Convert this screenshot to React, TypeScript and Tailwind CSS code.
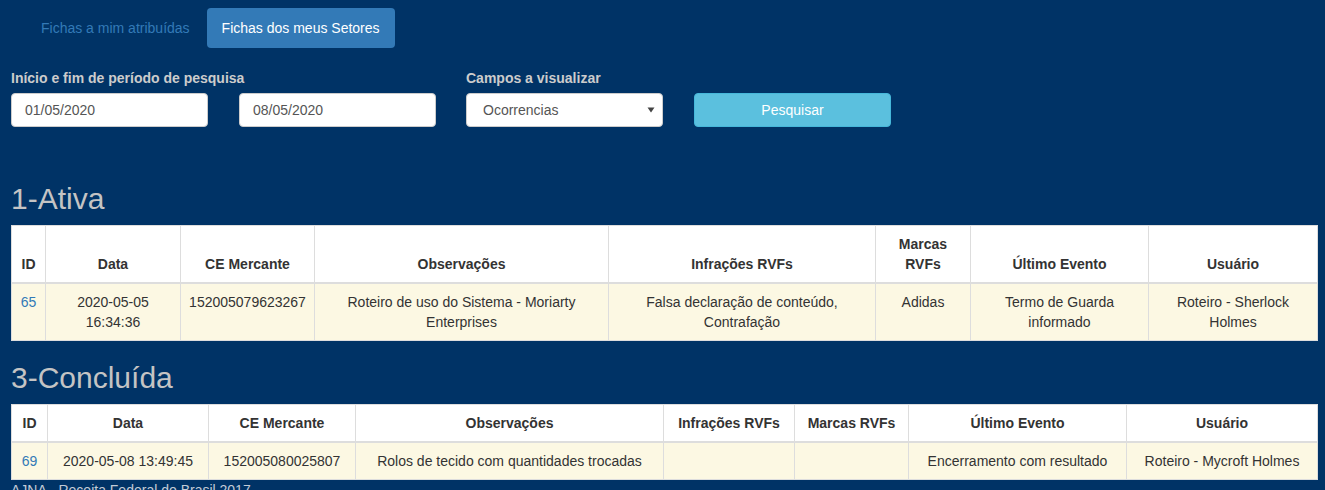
import React from "react";

type Col = { label: React.ReactNode; w: number };

function DataTable({ cols, row }: { cols: Col[]; row: React.ReactNode[] }) {
  return (
    <table className="w-full table-fixed border-collapse bg-white text-[14px] leading-[20px] text-[#333]">
      <colgroup>
        {cols.map((c, i) => (
          <col key={i} style={{ width: c.w }} />
        ))}
      </colgroup>
      <thead>
        <tr>
          {cols.map((c, i) => (
            <th
              key={i}
              className="border border-b-2 border-[#ddd] p-2 text-center align-bottom font-bold"
            >
              {c.label}
            </th>
          ))}
        </tr>
      </thead>
      <tbody>
        <tr className="bg-[#fcf8e3]">
          {row.map((v, i) => (
            <td key={i} className="border border-[#ddd] p-2 text-center align-top">
              {v}
            </td>
          ))}
        </tr>
      </tbody>
    </table>
  );
}

export default function App() {
  const cols1: Col[] = [
    { label: "ID", w: 34 },
    { label: "Data", w: 135 },
    { label: "CE Mercante", w: 134 },
    { label: "Observações", w: 294 },
    { label: "Infrações RVFs", w: 267 },
    { label: <>Marcas<br />RVFs</>, w: 95 },
    { label: "Último Evento", w: 178 },
    { label: "Usuário", w: 169 },
  ];
  const cols2: Col[] = [
    { label: "ID", w: 36 },
    { label: "Data", w: 161 },
    { label: "CE Mercante", w: 147 },
    { label: "Observações", w: 308 },
    { label: "Infrações RVFs", w: 131 },
    { label: "Marcas RVFs", w: 114 },
    { label: "Último Evento", w: 218 },
    { label: "Usuário", w: 191 },
  ];
  const link = (t: string) => <span className="text-[#337ab7]">{t}</span>;

  return (
    <div
      className="min-h-[490px] w-full bg-[#003366] text-[14px] leading-[20px]"
      style={{ fontFamily: '"Liberation Sans", Arial, Helvetica, sans-serif' }}
    >
      <div className="px-[11px] pt-2">
        <ul className="flex gap-[2px] pl-[15px]">
          <li className="rounded px-[15px] py-[10px] text-[#337ab7]">Fichas a mim atribuídas</li>
          <li className="rounded bg-[#337ab7] px-[15px] py-[10px] text-white">Fichas dos meus Setores</li>
        </ul>

        <div className="mt-[20px] flex">
          <div className="w-[425px]">
            <div className="mb-[5px] font-bold text-[#cccccc]">Início e fim de período de pesquisa</div>
            <div className="flex gap-x-[31px]">
              <div className="h-[34px] w-[197px] rounded border border-[#ccc] bg-white pl-[13px] pr-3 py-[6px] text-[#555]">01/05/2020</div>
              <div className="h-[34px] w-[197px] rounded border border-[#ccc] bg-white pl-[13px] pr-3 py-[6px] text-[#555]">08/05/2020</div>
            </div>
          </div>
          <div className="ml-[30px] w-[197px]">
            <div className="mb-[5px] font-bold text-[#cccccc]">Campos a visualizar</div>
            <div className="flex h-[34px] items-center justify-between rounded border border-[#ccc] bg-white pl-4 pr-[7px] text-[#555]">
              <span>Ocorrencias</span>
              <svg width="8" height="6" viewBox="0 0 8 6">
                <path d="M0.5 0.5 L7.5 0.5 L4 5.5 Z" fill="#444" />
              </svg>
            </div>
          </div>
          <div className="ml-[31px] flex w-[197px] flex-col justify-end">
            <button className="h-[34px] rounded border border-[#46b8da] bg-[#5bc0de] text-white">Pesquisar</button>
          </div>
        </div>

        <h2 className="mt-[55px] mb-[10px] text-[30px] leading-[33px] text-[#c4c4c4]">1-Ativa</h2>
        <DataTable
          cols={cols1}
          row={[
            link("65"),
            <>2020-05-05<br />16:34:36</>,
            "152005079623267",
            "Roteiro de uso do Sistema - Moriarty Enterprises",
            <>Falsa declaração de conteúdo,<br />Contrafação</>,
            "Adidas",
            <>Termo de Guarda<br />informado</>,
            <>Roteiro - Sherlock<br />Holmes</>,
          ]}
        />

        <h2 className="mt-[20px] mb-[10px] text-[30px] leading-[33px] text-[#c4c4c4]">3-Concluída</h2>
        <DataTable
          cols={cols2}
          row={[
            link("69"),
            "2020-05-08 13:49:45",
            "152005080025807",
            "Rolos de tecido com quantidades trocadas",
            "",
            "",
            "Encerramento com resultado",
            "Roteiro - Mycroft Holmes",
          ]}
        />
        <div className="text-[#c3cbd6]">AJNA - Receita Federal do Brasil 2017</div>
      </div>
    </div>
  );
}
